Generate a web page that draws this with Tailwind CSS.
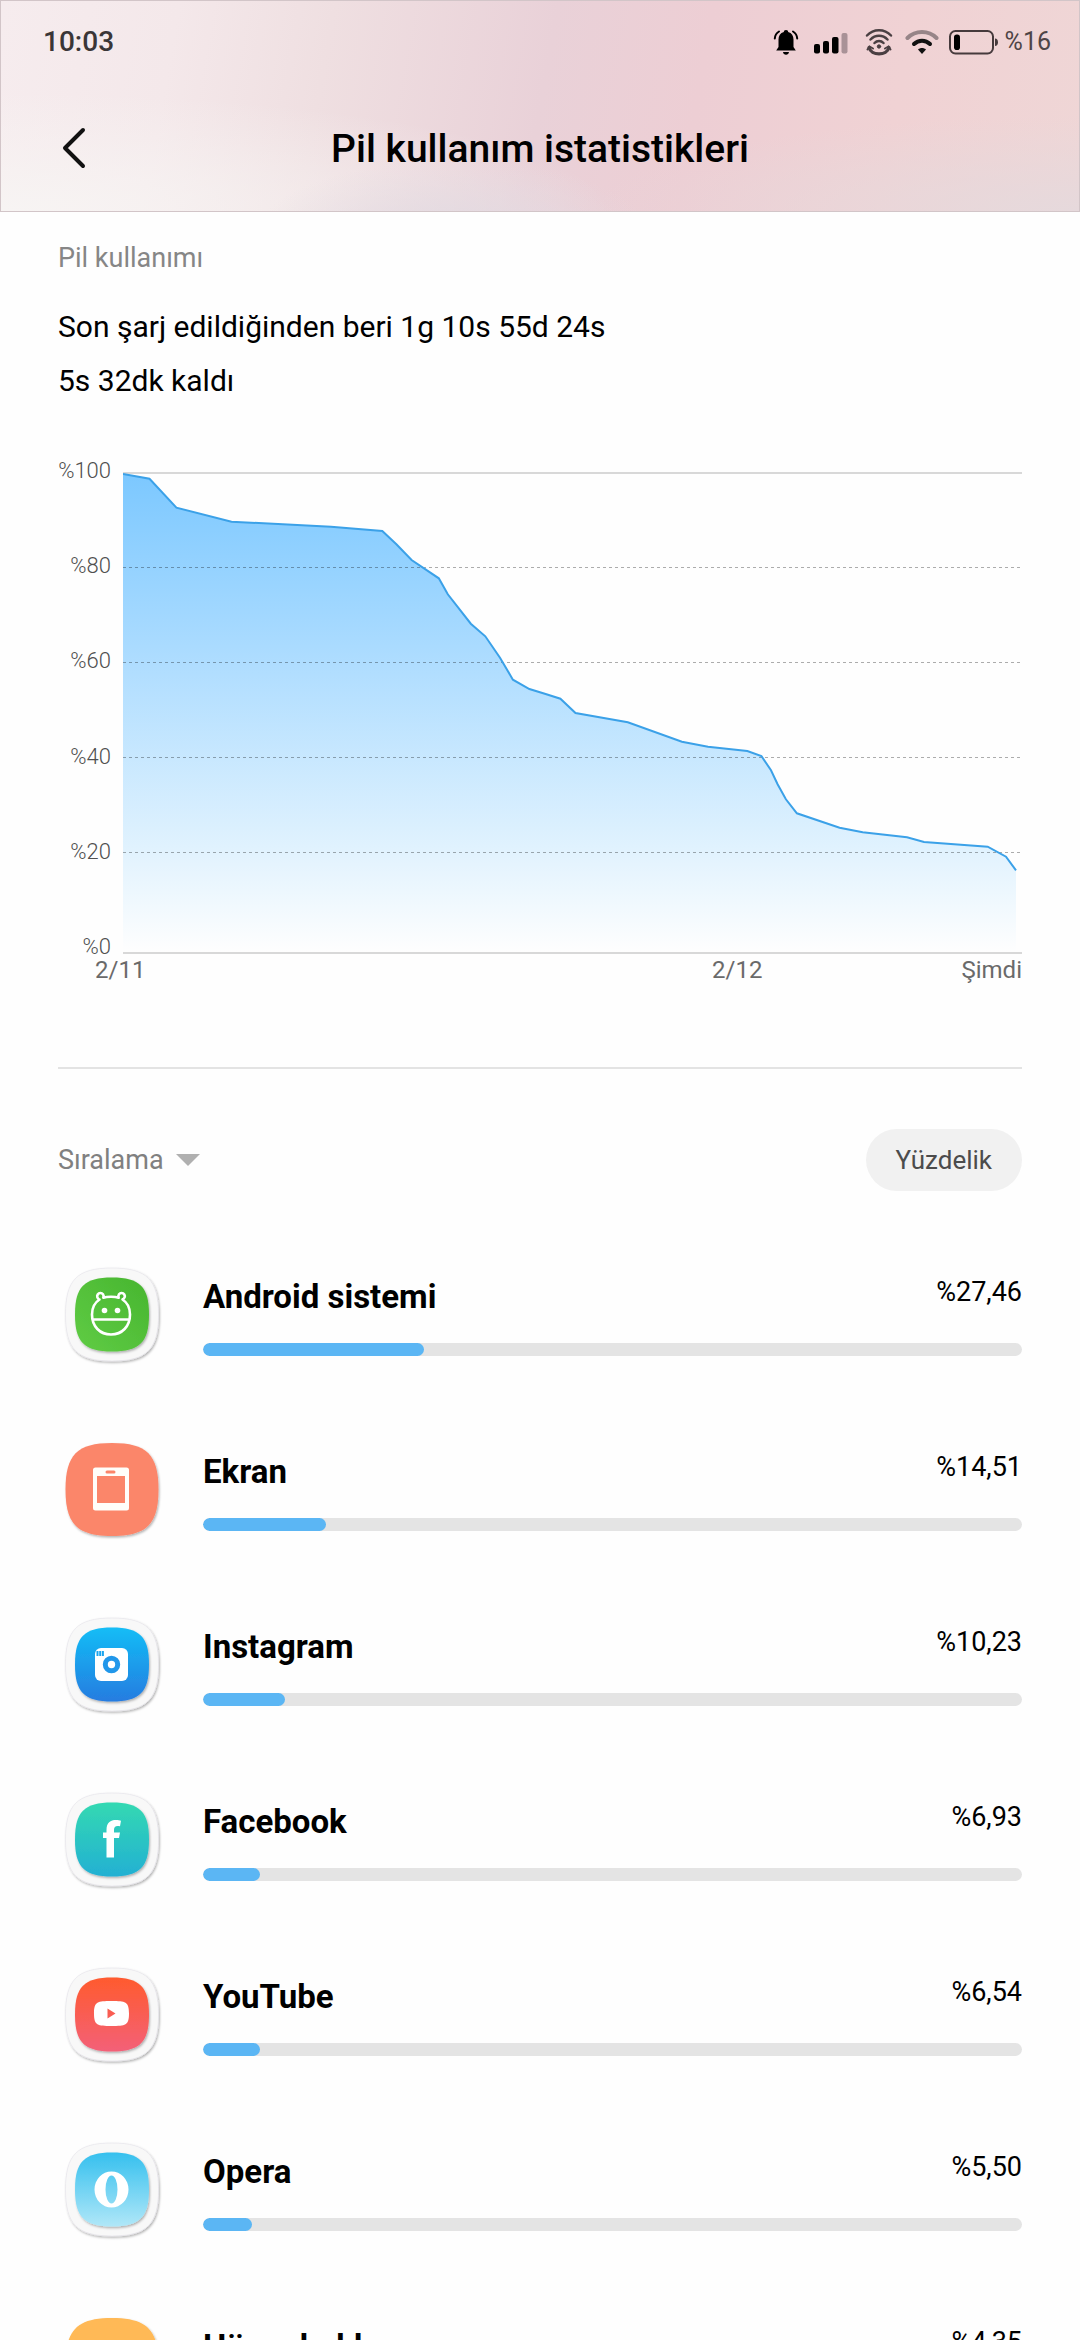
<!DOCTYPE html>
<html lang="tr">
<head>
<meta charset="utf-8">
<meta name="viewport" content="width=device-width, initial-scale=1">
<title>Pil kullanım istatistikleri</title>
<script src="https://cdn.jsdelivr.net/npm/@tailwindcss/browser@4"></script>
</head>
<body class="flex h-screen flex-col overflow-hidden bg-[#fefefe] font-['Roboto',sans-serif] text-black">
<svg class="absolute size-0" aria-hidden="true">
  <defs>
    <linearGradient id="g-android" x1="1" y1="0" x2="0" y2="1"><stop stop-color="#47b52f"/><stop offset="1" stop-color="#60cc45"/></linearGradient>
    <linearGradient id="g-instagram" x2="0" y2="1"><stop stop-color="#12bdf6"/><stop offset="1" stop-color="#267ce0"/></linearGradient>
    <linearGradient id="g-facebook" x2="0" y2="1"><stop stop-color="#33d9b2"/><stop offset="1" stop-color="#23b0d3"/></linearGradient>
    <linearGradient id="g-youtube" x2="0" y2="1"><stop stop-color="#ff5a2e"/><stop offset="1" stop-color="#f36078"/></linearGradient>
    <linearGradient id="g-opera" x2="0" y2="1"><stop stop-color="#35c0ee"/><stop offset="1" stop-color="#b0e7f8"/></linearGradient>
    <filter id="shadow" x="-10%" y="-10%" width="125%" height="125%"><feDropShadow dx="1" dy="1.5" stdDeviation="1" flood-color="#000" flood-opacity=".3"/></filter>
    <!-- white plate behind an app icon -->
    <g id="plate"><path filter="url(#shadow)" fill="#f8f8f8" stroke="#e4e2ea" stroke-width=".6" d="M49 3C84 3 95.500 15 95.500 49.500S84 96 49 96 2.500 84 2.500 49.500 14 3 49 3Z"/></g>
    <path id="tile" filter="url(#shadow)" d="M49 12.500C77 12.500 86 22 86 49.500S77 86.500 49 86.500 12 77 12 49.500 21 12.500 49 12.500Z"/>
  </defs>
</svg>

<header class="flex h-[212px] shrink-0 flex-col border border-[#d2c5c8] bg-[radial-gradient(ellipse_at_100%_100%,#e6d9dc_0%,#e6d9dc00_32%),radial-gradient(ellipse_at_42%_110%,#e2dae1_0%,#e2dae100_22%),radial-gradient(ellipse_at_0%_100%,#f7f4f3_0%,#f7f4f300_40%),linear-gradient(100deg,#f6ecee_0%,#f4e8ea_16%,#efdfe1_30%,#e9d1d8_50%,#edced4_64%,#f0d2d4_82%,#efd6d6_100%)]">
  <div class="flex h-[82px] items-center justify-between pr-7 pl-[42px]">
    <time class="text-[28px] leading-8 font-medium text-[#3a3637]">10:03</time>
    <div class="flex items-center">
      <svg class="mr-[14px] h-7 w-[26px]" viewBox="0 0 26 28"><path d="M13 2c1.500 0 2.200.800 2.200 2 3.600 1 5.300 4 5.300 7.500v7.500l2.300 3.500H3.200L5.500 19v-7.500C5.500 8 7.200 5 10.800 4c0-1.200.700-2 2.200-2Z"/><path d="M10 24h6c-.300 1.700-1.300 2.700-3 2.700s-2.700-1-3-2.700Z"/><path d="M6 3.500C3.500 5 2 7.500 1.800 10.500M20 3.500c2.500 1.500 4 4 4.200 7" fill="none" stroke="#000" stroke-width="2" stroke-linecap="round"/></svg>
      <svg class="mr-4 h-7 w-9" viewBox="0 0 36 28"><rect x="1" y="16" width="6" height="9.500" rx="2"/><rect x="10" y="13" width="6" height="12.500" rx="2"/><rect x="19" y="9" width="6.500" height="16.500" rx="2"/><rect x="28.500" y="5" width="6" height="20.500" rx="2" fill="#a99297"/></svg>
      <svg class="mr-3 h-7 w-7" viewBox="0 0 28 28" fill="none" stroke="#4a3f42" stroke-width="2.500" stroke-linecap="round"><path d="M2 7.500C8.500.600 19.500.600 26 7.500M5.500 11.500c4.700-5 12.300-5 17 0M9.500 15c2.500-2.700 6.500-2.700 9 0"/><circle cx="14" cy="18.500" r="1.700" fill="#4a3f42" stroke-width="1"/><path d="M4 19.500c2 8.500 18 8.500 20 0" stroke-width="3.200"/><path d="M2.500 21.500 4.500 18.500 8 20.500M25.500 21.500l-2-3-3.500 2" stroke-width="2"/></svg>
      <svg class="mr-[10px] h-7 w-[34px]" viewBox="0 0 34 28" fill="none" stroke-linecap="round"><path d="M2.500 10C10.500 2 23.500 2 31.500 10" stroke="#978588" stroke-width="4"/><path d="M9 16c4.500-4.500 11.500-4.500 16 0" stroke="#111" stroke-width="4"/><path d="M13 21.500c2.400-2 5.600-2 8 0L17 26Z" fill="#111"/></svg>
      <svg class="mr-[6px] h-7 w-[50px]" viewBox="0 0 50 28"><rect x="1" y="3" width="43" height="22.500" rx="5.500" fill="none" stroke="#463a3c" stroke-width="2"/><rect x="5" y="6.500" width="6" height="15.500" rx="2.800"/><path d="M46 10.500c1.800 0 3 1.500 3 3.700s-1.200 3.800-3 3.800Z" fill="#463a3c"/></svg>
      <span class="text-[25px] leading-8 text-[#4e4446]">%16</span>
    </div>
  </div>
  <div class="grid grid-cols-[1fr_auto_1fr] items-center px-[58px] pt-[42px]">
    <button type="button" aria-label="Geri" class="w-8 text-[#111]"><svg class="h-11 w-8" viewBox="0 0 32 44" fill="none" stroke="currentColor" stroke-width="4" stroke-linecap="round" stroke-linejoin="round"><path d="M24 3 6 21l18 18"/></svg></button>
    <h1 class="text-[39px] leading-[48px] font-medium">Pil kullanım istatistikleri</h1>
  </div>
</header>

<main class="min-h-0 flex-1 overflow-hidden px-[58px]">
  <section>
    <h2 class="pt-[30px] text-[27px] leading-8 text-[#868686]">Pil kullanımı</h2>
    <p class="mt-[26px] text-[30px] leading-[54px]">Son şarj edildiğinden beri 1g 10s 55d 24s<br>5s 32dk kaldı</p>

    <figure class="mt-16">
      <div class="flex gap-3">
        <div class="-mt-[13px] -mb-[5px] flex w-[53px] flex-col justify-between text-right text-[22px] leading-6 font-light text-[#4f4f4f]">
          <span>%100</span><span>%80</span><span>%60</span><span>%40</span><span>%20</span><span>%0</span>
        </div>
        <svg class="h-[482px] min-w-0 flex-1" viewBox="123 472 899 482" preserveAspectRatio="none" role="img" aria-label="Pil seviyesi grafiği">
          <defs><linearGradient id="area" gradientUnits="userSpaceOnUse" x1="0" y1="474" x2="0" y2="952"><stop stop-color="#7cc8ff"/><stop offset=".4" stop-color="#afddff"/><stop offset=".78" stop-color="#e0f2fe"/><stop offset="1" stop-color="#fefefe"/></linearGradient></defs>
          <path fill="url(#area)" d="M123 474 149.500 478.700 176.400 507.700 231.500 521.700 331 526.700 382.300 531 396.400 544.300 411.600 560 438.800 578.300 447.800 594.300 470.800 623.700 485.300 636.300 500 657.700 512.900 679.700 529.400 689 545.600 694 560.400 698.700 575.500 713 627.800 722.300 681.900 741.700 708 746.700 747.300 751 761.400 756 771 770.300 777.600 784.300 785.900 799.300 796.900 813.300 839.600 827.700 862.700 832.300 907 837.300 924 842 987.700 846.700 1006 856.700 1016 870.300V952H123Z"/>
          <path d="M123 473H1022M123 953H1022" stroke="#d8d8d8" stroke-width="2"/>
          <path d="M123 567.500H1022M123 662.500H1022M123 757.500H1022M123 852.500H1022" stroke="#000" stroke-opacity=".32" stroke-dasharray="3 3"/>
          <path fill="none" stroke="#3ba1e8" stroke-width="2" d="M123 474 149.500 478.700 176.400 507.700 231.500 521.700 331 526.700 382.300 531 396.400 544.300 411.600 560 438.800 578.300 447.800 594.300 470.800 623.700 485.300 636.300 500 657.700 512.900 679.700 529.400 689 545.600 694 560.400 698.700 575.500 713 627.800 722.300 681.900 741.700 708 746.700 747.300 751 761.400 756 771 770.300 777.600 784.300 785.900 799.300 796.900 813.300 839.600 827.700 862.700 832.300 907 837.300 924 842 987.700 846.700 1006 856.700 1016 870.300"/>
        </svg>
      </div>
      <figcaption class="grid grid-cols-[72%_28%] pl-[37px] text-[24px] leading-8 text-[#6a6a6a]">
        <span class="flex justify-between"><span>2/11</span><span>2/12</span></span><span class="text-right">Şimdi</span>
      </figcaption>
    </figure>
  </section>

  <hr class="mt-[81px] border-t-2 border-[#e3e3e3]">

  <div class="mt-[60px] flex items-center justify-between">
    <button type="button" class="flex items-center gap-3 text-[27px] leading-8 text-[#808080]">Sıralama<svg class="h-3 w-6" viewBox="0 0 24 12"><path fill="#b0b0b0" d="M0 0h24L12 12Z"/></svg></button>
    <button type="button" class="h-[62px] rounded-full bg-[#f1f1f1] px-[30px] text-[26px] leading-8 text-[#4c4c4c]">Yüzdelik</button>
  </div>

  <ul class="mt-[57px]">
    <li class="flex h-[175px] gap-[45px] pt-5">
      <svg class="size-[100px] shrink-0 overflow-visible" viewBox="-5 3 100 100"><use href="#plate"/><use href="#tile" fill="url(#g-android)"/><g transform="translate(0 1)" fill="none" stroke="#fff" stroke-width="2.600" stroke-linejoin="round"><path d="M36.500 33.500C31 37 29 42 29 48.500c0 12 8 20 19 20s19-8 19-20c0-6.500-2-11.500-7.500-15 2-1 3-3 1.800-5-1.300-2-4-2-5.300-.300-.700 1-.800 2.300-.300 3.500-4-1.300-11.400-1.300-15.400 0 .5-1.200.4-2.500-.3-3.500-1.300-1.700-4-1.700-5.300.3-1.200 2-.2 4 1.500 5ZM29 53.500h38" /><g fill="#fff" stroke="none"><circle cx="41.500" cy="44.500" r="2.800"/><circle cx="54.500" cy="44.500" r="2.800"/></g></g></svg>
      <div class="min-w-0 flex-1"><div class="flex justify-between"><h3 class="pt-[9px] text-[33px] leading-10 font-bold">Android sistemi</h3><span class="pt-2 text-[27px] leading-8">%27,46</span></div><div role="progressbar" aria-valuenow="27" aria-label="Android sistemi" class="mt-[26px] h-[13px] overflow-hidden rounded-full bg-[#e4e4e4]"><div class="h-full rounded-full bg-[#5bb6f4]" style="width:27%"></div></div></div>
    </li>
    <li class="flex h-[175px] gap-[45px] pt-5">
      <svg class="size-[100px] shrink-0 overflow-visible" viewBox="-5 3 100 100"><path filter="url(#shadow)" fill="#fb866b" d="M49 3C84 3 95.500 15 95.500 49.500S84 96 49 96 2.500 84 2.500 49.500 14 3 49 3Z"/><path fill="#fffefa" fill-rule="evenodd" d="M32.500 27.500h31q2.500 0 2.500 2.500v38q0 2.500-2.500 2.500h-31q-2.500 0-2.500-2.500V30q0-2.500 2.500-2.500ZM34 36v27h28V36ZM44 30.500q-1.500 0-1.500 1.500t1.500 1.500h7q1.500 0 1.500-1.500t-1.500-1.500Z"/></svg>
      <div class="min-w-0 flex-1"><div class="flex justify-between"><h3 class="pt-[9px] text-[33px] leading-10 font-bold">Ekran</h3><span class="pt-2 text-[27px] leading-8">%14,51</span></div><div role="progressbar" aria-valuenow="15" aria-label="Ekran" class="mt-[26px] h-[13px] overflow-hidden rounded-full bg-[#e4e4e4]"><div class="h-full rounded-full bg-[#5bb6f4]" style="width:15%"></div></div></div>
    </li>
    <li class="flex h-[175px] gap-[45px] pt-5">
      <svg class="size-[100px] shrink-0 overflow-visible" viewBox="-5 3 100 100"><use href="#plate"/><use href="#tile" fill="url(#g-instagram)"/><rect x="32" y="33" width="33" height="33" rx="6" fill="#fff"/><path fill="#1ba4ee" d="M33.500 36h2v5h-2Zm2.700 0h2v5h-2Zm2.700 0h2v5h-2Z"/><circle cx="48.500" cy="49.500" r="6.200" fill="#fff" stroke="#2197ea" stroke-width="5"/></svg>
      <div class="min-w-0 flex-1"><div class="flex justify-between"><h3 class="pt-[9px] text-[33px] leading-10 font-bold">Instagram</h3><span class="pt-2 text-[27px] leading-8">%10,23</span></div><div role="progressbar" aria-valuenow="10" aria-label="Instagram" class="mt-[26px] h-[13px] overflow-hidden rounded-full bg-[#e4e4e4]"><div class="h-full rounded-full bg-[#5bb6f4]" style="width:10%"></div></div></div>
    </li>
    <li class="flex h-[175px] gap-[45px] pt-5">
      <svg class="size-[100px] shrink-0 overflow-visible" viewBox="-5 3 100 100"><use href="#plate"/><use href="#tile" fill="url(#g-facebook)"/><path fill="#fff" d="M43.500 67.500V48H40v-5.500h3.500V40c0-7.500 4-10 9.500-10 2 0 4 .300 5 .700l-1 5.600c-4-.800-6 0-6 3.700v2.500h6L56 48h-5v19.500Z"/></svg>
      <div class="min-w-0 flex-1"><div class="flex justify-between"><h3 class="pt-[9px] text-[33px] leading-10 font-bold">Facebook</h3><span class="pt-2 text-[27px] leading-8">%6,93</span></div><div role="progressbar" aria-valuenow="7" aria-label="Facebook" class="mt-[26px] h-[13px] overflow-hidden rounded-full bg-[#e4e4e4]"><div class="h-full rounded-full bg-[#5bb6f4]" style="width:7%"></div></div></div>
    </li>
    <li class="flex h-[175px] gap-[45px] pt-5">
      <svg class="size-[100px] shrink-0 overflow-visible" viewBox="-5 3 100 100"><use href="#plate"/><use href="#tile" fill="url(#g-youtube)"/><path fill="#fff" fill-rule="evenodd" d="M48.500 36c14 0 17.500.500 17.500 12.500S62.500 61 48.500 61 31 60.500 31 48.500 34.500 36 48.500 36ZM44.500 43.500v10l8-5Z"/></svg>
      <div class="min-w-0 flex-1"><div class="flex justify-between"><h3 class="pt-[9px] text-[33px] leading-10 font-bold">YouTube</h3><span class="pt-2 text-[27px] leading-8">%6,54</span></div><div role="progressbar" aria-valuenow="7" aria-label="YouTube" class="mt-[26px] h-[13px] overflow-hidden rounded-full bg-[#e4e4e4]"><div class="h-full rounded-full bg-[#5bb6f4]" style="width:7%"></div></div></div>
    </li>
    <li class="flex h-[175px] gap-[45px] pt-5">
      <svg class="size-[100px] shrink-0 overflow-visible" viewBox="-5 3 100 100"><use href="#plate"/><use href="#tile" fill="url(#g-opera)"/><path fill="#fff" fill-rule="evenodd" d="M48.500 31.500a17 18 0 1 1 0 36 17 18 0 1 1 0-36ZM48.500 35.500a6 14 0 1 0 0 28 6 14 0 1 0 0-28Z"/></svg>
      <div class="min-w-0 flex-1"><div class="flex justify-between"><h3 class="pt-[9px] text-[33px] leading-10 font-bold">Opera</h3><span class="pt-2 text-[27px] leading-8">%5,50</span></div><div role="progressbar" aria-valuenow="6" aria-label="Opera" class="mt-[26px] h-[13px] overflow-hidden rounded-full bg-[#e4e4e4]"><div class="h-full rounded-full bg-[#5bb6f4]" style="width:6%"></div></div></div>
    </li>
    <li class="flex h-[175px] gap-[45px] pt-5">
      <svg class="size-[100px] shrink-0 overflow-visible" viewBox="-5 3 100 100"><path filter="url(#shadow)" fill="#ffb957" d="M49 3C84 3 95.500 15 95.500 49.500S84 96 49 96 2.500 84 2.500 49.500 14 3 49 3Z"/></svg>
      <div class="min-w-0 flex-1"><div class="flex justify-between"><h3 class="pt-[9px] text-[33px] leading-10 font-bold">Hücre bekleme</h3><span class="pt-2 text-[27px] leading-8">%4,35</span></div><div role="progressbar" aria-valuenow="4" aria-label="Hücre bekleme" class="mt-[26px] h-[13px] overflow-hidden rounded-full bg-[#e4e4e4]"><div class="h-full rounded-full bg-[#5bb6f4]" style="width:4%"></div></div></div>
    </li>
  </ul>
</main>
</body>
</html>
